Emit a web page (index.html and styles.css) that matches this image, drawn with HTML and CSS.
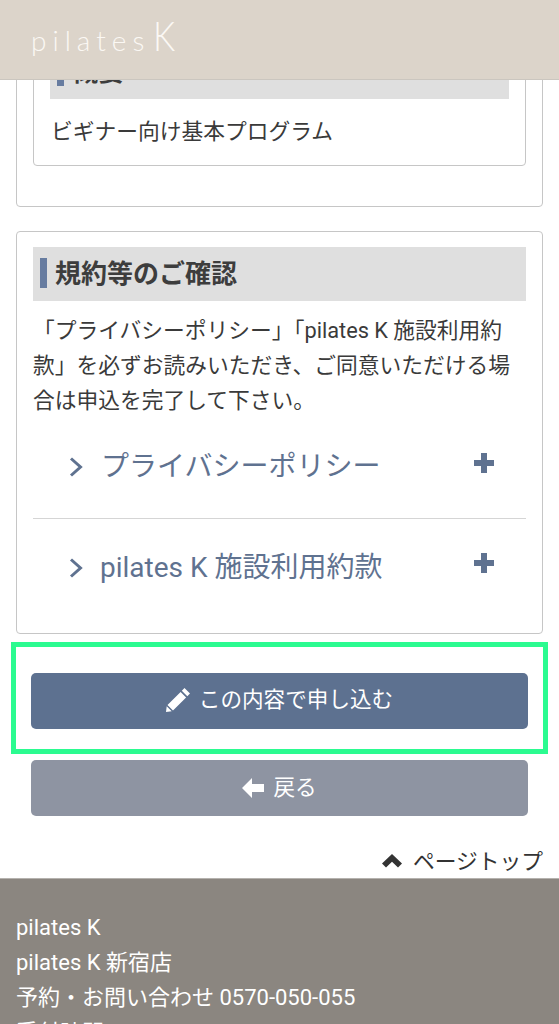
FILE: index.html
```html
<!DOCTYPE html>
<html lang="ja">
<head>
<meta charset="utf-8">
<title>pilates K</title>
<link rel="stylesheet" href="styles.css">
</head>
<body>
<header class="site-header">
  <div class="logo"><span class="logo-main">pilates</span><span class="logo-k">K</span></div>
</header>
<main class="content">
  <section class="card first-card">
    <div class="inner-card">
      <h2 class="heading inner-heading">概要</h2>
      <p class="text">ビギナー向け基本プログラム</p>
    </div>
  </section>
  <section class="card terms-card">
    <h2 class="heading">規約等のご確認</h2>
    <p class="text terms-text">「プライバシーポリシー」「pilates K 施設利用約款」を必ずお読みいただき、ご同意いただける場合は申込を完了して下さい。</p>
    <div class="acc-row acc-first">
      <svg class="chev" viewBox="0 0 14 20"><path d="M2 1.500 11.500 10 2 18.500" fill="none" stroke="currentColor" stroke-width="3"/></svg>
      <span class="acc-label">プライバシーポリシー</span>
      <svg class="plus" viewBox="0 0 20 20"><path d="M7 0h6v7h7v6h-7v7H7v-7H0V7h7z" fill="currentColor"/></svg>
    </div>
    <div class="acc-row acc-second">
      <svg class="chev" viewBox="0 0 14 20"><path d="M2 1.500 11.500 10 2 18.500" fill="none" stroke="currentColor" stroke-width="3"/></svg>
      <span class="acc-label acc-label-latin">pilates K 施設利用約款</span>
      <svg class="plus" viewBox="0 0 20 20"><path d="M7 0h6v7h7v6h-7v7H7v-7H0V7h7z" fill="currentColor"/></svg>
    </div>
  </section>
  <div class="highlight">
    <a class="btn btn-primary">
      <svg class="btn-icon" viewBox="0 0 24 24"><path d="M18.500 0 24 5.500l-2.700 2.700-5.500-5.500zM14.600 3.900l5.500 5.500L7 22.500 1.500 17zM.7 18.300l5 5L0 24z" fill="currentColor"/></svg>
      <span>この内容で申し込む</span>
    </a>
  </div>
  <a class="btn btn-back">
    <svg class="btn-icon back-icon" viewBox="0 0 22 20"><path d="M0 10 10 0v6h12v8H10v6z" fill="currentColor"/></svg>
    <span>戻る</span>
  </a>
  <div class="page-top">
    <svg class="top-icon" viewBox="0 0 20 14"><path d="M10 0l10 9.500-4 4-6-5.700-6 5.700-4-4z" fill="currentColor"/></svg>
    <span>ページトップ</span>
  </div>
</main>
<footer class="site-footer">
  <p>pilates K</p>
  <p>pilates K 新宿店</p>
  <p>予約・お問い合わせ 0570-050-055</p>
  <p>受付時間</p>
</footer>
</body>
</html>
```
FILE: styles.css
```css
* { box-sizing: border-box; }
html, body { margin: 0; padding: 0; height: 1024px; overflow: hidden; }
body {
  background: #fff;
  color: #3a3a3a;
  font-family: Roboto, "Noto Sans CJK JP", sans-serif;
  font-size: 21.750px;
  line-height: 35px;
}
.site-header {
  position: fixed;
  top: 0; left: 0; right: 0;
  height: 80px;
  background: #dcd4ca;
  border-bottom: 1px solid #cbc6bf;
  z-index: 5;
  display: flex;
  align-items: flex-start;
  padding: 16px 0 0 31px;
}
.logo { display: flex; align-items: baseline; color: #fbf8f4; font-family: Lato, sans-serif; font-weight: 300; line-height: 40px; }
.logo-main { font-size: 28px; letter-spacing: 6px; }
.logo-k { font-size: 41px; margin-left: 3px; line-height: 40px; transform: scaleX(.85); transform-origin: left bottom; }
.content { padding: 0 16px; }
.card {
  border: 1.500px solid #c6c6c6;
  border-radius: 4px;
  background: #fff;
}
.first-card { height: 207px; padding: 24px 16px 0; }
.inner-card {
  border: 1.500px solid #c6c6c6;
  border-radius: 4px;
  height: 141px;
  padding: 19px 16px 0;
}
.heading {
  margin: 0;
  height: 54px;
  background: #dfdfdf;
  color: #3d3d3d;
  font-size: 26px;
  font-weight: 700;
  line-height: 50px;
  padding-left: 22px;
  display: flex;
  align-items: center;
  position: relative;
}
.heading::before {
  content: "";
  position: absolute;
  left: 7px; top: 11px;
  width: 7px; height: 30px;
  background: #677ca0;
}
.text { margin: 0; }
.inner-card .text { padding: 15px 1px 0; }
.terms-card { margin-top: 24px; height: 403px; padding: 15px 16px 0; }
.terms-text { padding-top: 12px; }
.acc-row {
  display: flex;
  align-items: center;
  color: #5f7290;
  padding-left: 36px;
  padding-right: 32px;
}
.acc-first { height: 101px; padding-bottom: 3px; border-bottom: 1px solid #d5d5d5; }
.acc-second { height: 97px; padding-top: 1px; }
.chev { width: 14px; height: 20px; flex: none; color: #5f7290; }
.acc-label { font-size: 28px; margin-left: 18px; flex: 1; white-space: nowrap; line-height: 40px; }
.acc-label-latin { margin-left: 17px; }
.plus { width: 20px; height: 20px; flex: none; margin-top: -8px; }
.acc-second .plus { margin-top: -10px; }
.highlight {
  margin: 8px -5px 0;
  height: 112px;
  border: 5px solid #2bfb90;
  padding: 26px 15px 0;
}
.btn {
  display: flex;
  align-items: center;
  justify-content: center;
  height: 56px;
  padding-bottom: 3px;
  border-radius: 5px;
  color: #fff;
  font-size: 21.600px;
}
.btn-primary { background: #5d7190; }
.btn-back { background: #8e94a2; margin: 6px 0 0 15px; width: 497px; padding-bottom: 1px; }
.btn-icon { width: 24px; height: 24px; margin-right: 9px; flex: none; }
.back-icon { width: 22px; height: 20px; }
.page-top {
  display: flex;
  justify-content: flex-end;
  align-items: center;
  gap: 11px;
  margin-top: 28px;
  height: 34px;
  color: #333;
  white-space: nowrap;
}
.top-icon { width: 20px; height: 14px; flex: none; }
.site-footer {
  background: #8b8680;
  border-top: 1.500px solid #b5b2ae;
  color: #fff;
  font-size: 22px;
  padding: 31px 16px 0;
}
.site-footer p { margin: 0; }
```
